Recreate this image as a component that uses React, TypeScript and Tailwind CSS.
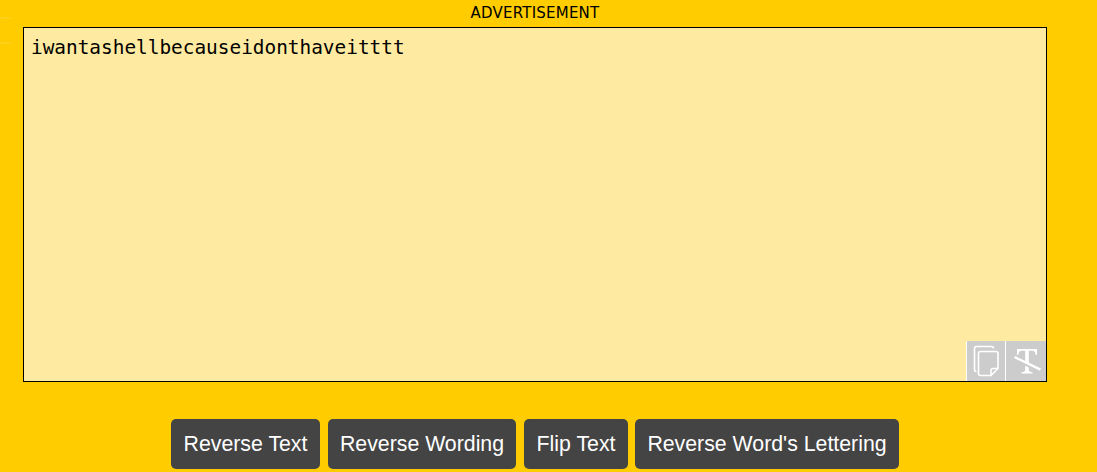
import React, { useState } from "react";

const actions = [
  { label: "Reverse Text", size: "w-[149px] mr-2" },
  { label: "Reverse Wording", size: "w-[188px] mr-2" },
  { label: "Flip Text", size: "w-[104px] mr-[7px]" },
  { label: "Reverse Word's Lettering", size: "w-[264px]" },
];

function CopyIcon() {
  return (
    <svg width="38" height="40" viewBox="0 0 38 40" fill="none" stroke="white" strokeWidth="1.6">
      <path d="M9.5 30.5H9Q7.5 30.5 7.5 28V7.5Q7.5 5.5 9.5 5.5H24.5Q26.5 5.5 26.5 7.5" />
      <path d="M13.5 10.5H29Q31 10.5 31 12.5V27.5L24 34.5H13.5Q11.5 34.5 11.5 32.5V12.5Q11.5 10.5 13.5 10.5Z" />
      <path d="M24 34.5V29.5Q24 27.5 26 27.5H31" />
    </svg>
  );
}

function ClearFormatIcon() {
  return (
    <svg width="40" height="40" viewBox="0 0 40 40" fill="none">
      <path
        fill="white"
        d="M11 8H31V14H29.8Q29.3 10 26.5 9.8H22.8V29Q22.8 31 26.5 31.2V32.5H15.5V31.2Q19.2 31 19.2 29V9.8H15.5Q12.7 10 12.2 14H11Z"
      />
      <path d="M9 18L34 30.1" stroke="#ccc" strokeWidth="3" />
      <path d="M8.5 16L34.5 28.6" stroke="white" strokeWidth="2.4" />
    </svg>
  );
}

export default function App() {
  const [text, setText] = useState("iwantashellbecauseidonthaveitttt");
  return (
    <main className="flex h-[472px] overflow-hidden bg-[#ffcc00] text-black">
      <div className="w-[23px] shrink-0 pt-[17px]">
        <div className="h-[27px] w-[11px] border-y-2 border-[#ffd01a]" />
      </div>
      <div className="flex w-[1024px] flex-col">
        <div className="h-[27px] pt-px text-center font-['DejaVu_Sans',sans-serif] text-[15px] leading-[25px] tracking-[0.22px]">
          ADVERTISEMENT
        </div>
        <div className="relative h-[355px] border border-black bg-[#feeba1]">
          <textarea
            value={text}
            onChange={(e) => setText(e.target.value)}
            spellCheck={false}
            className="block h-full w-full resize-none bg-transparent px-[7px] py-2 font-['DejaVu_Sans_Mono',monospace] text-[19.4px] leading-6 outline-none"
          />
          <div className="absolute right-0 bottom-0 flex h-10">
            <button aria-label="Copy" className="w-[39px] border-l border-white bg-[#ccc]">
              <CopyIcon />
            </button>
            <button aria-label="Clear" className="w-[41px] border-l border-white bg-[#ccc]">
              <ClearFormatIcon />
            </button>
          </div>
        </div>
        <div className="mt-[37px] flex justify-center font-['Liberation_Sans',sans-serif] text-[21.3px]">
          {actions.map((a) => (
            <button
              key={a.label}
              className={`${a.size} h-[50px] shrink-0 rounded-[5px] bg-[#444] pt-0.5 text-center whitespace-nowrap text-white`}
            >
              {a.label}
            </button>
          ))}
        </div>
      </div>
    </main>
  );
}
